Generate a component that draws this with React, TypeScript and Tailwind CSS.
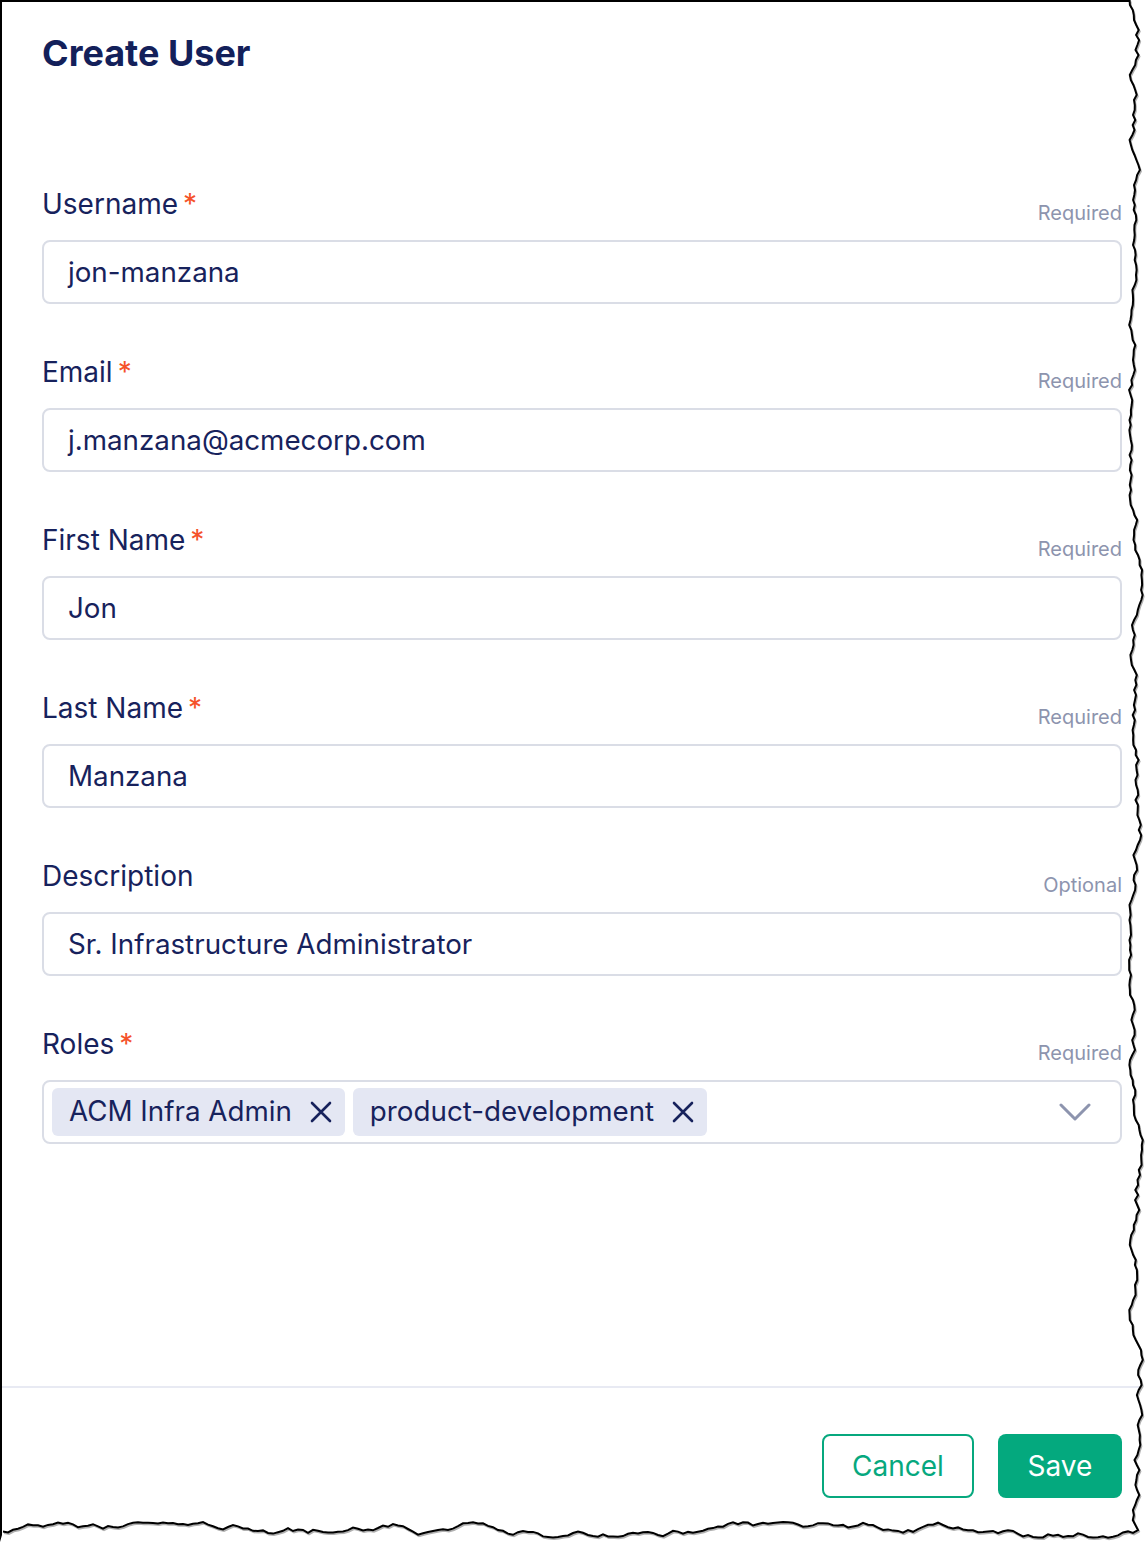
import React from "react";

function rng(seed: number) {
  let s = seed;
  return () => {
    s = (s * 1103515245 + 12345) % 2147483648;
    return s / 2147483648;
  };
}

function buildTear() {
  const r = rng(7);
  const right: [number, number][] = [];
  let x = 1124;
  for (let y = 0; y <= 1522; y += 5) {
    x += (r() - 0.5) * 6;
    if (x < 1129) x = 1129 + r() * 2;
    if (x > 1143) x = 1143 - r() * 2;
    right.push([x, y]);
  }
  const bottom: [number, number][] = [];
  let y = 1530;
  for (let xx = 1138; xx >= 0; xx -= 5) {
    y += (r() - 0.5) * 6;
    if (y < 1522) y = 1522 + r() * 2;
    if (y > 1538) y = 1538 - r() * 2;
    bottom.push([xx, y]);
  }
  const pts = [...right, ...bottom];
  const line = pts.map(([a, b], i) => `${i === 0 ? "M" : "L"}${a.toFixed(1)},${b.toFixed(1)}`).join(" ");
  const fill = `${line} L0,1542 L1148,1542 L1148,0 Z`;
  return { line, fill };
}

const tear = buildTear();

function LabelRow({ label, required }: { label: string; required: boolean }) {
  return (
    <div className="flex items-end justify-between h-[36px]">
      <div className="text-[28px] leading-[36px] text-[#17225c]">
        {label}
        {required && <span className="text-[#f5522a] ml-[5px]">*</span>}
      </div>
      <div className="text-[20px] leading-[18px] text-[#8d94ae]">{required ? "Required" : "Optional"}</div>
    </div>
  );
}

function Field({ label, required, value }: { label: string; required: boolean; value: string }) {
  return (
    <div className="mb-[50px]">
      <LabelRow label={label} required={required} />
      <div className="mt-[18px] h-[64px] rounded-[8px] border-2 border-[#dadde6] flex items-center px-[24px] pt-[1px] text-[27.75px] text-[#17225c]">
        {value}
      </div>
    </div>
  );
}

function XIcon() {
  return (
    <svg width="22" height="22" viewBox="0 0 22 22" fill="none" stroke="#17225c" strokeWidth="2.6" strokeLinecap="round">
      <path d="M2 2 L20 20 M20 2 L2 20" />
    </svg>
  );
}

function Chip({ text }: { text: string }) {
  return (
    <div className="h-[48px] rounded-[6px] bg-[#e4e7f3] flex items-center pl-[17px] pr-[13px] gap-[18px] text-[27.75px] text-[#17225c]">
      <span>{text}</span>
      <XIcon />
    </div>
  );
}

export default function App() {
  return (
    <div className="relative w-[1148px] h-[1542px] bg-white overflow-hidden" style={{ fontFamily: "Inter, 'Noto Sans', sans-serif" }}>
      <div className="w-[1148px] h-[1542px] border-l-2 border-t-2 border-black flex flex-col">
        <div className="pl-[40px] pr-[26px] flex-1">
          <h1 className="mt-[29px] text-[36px] leading-[44px] font-bold text-[#13205a]">Create User</h1>
          <div className="mt-[111px] w-[1080px]">
            <Field label="Username" required value="jon-manzana" />
            <Field label="Email" required value="j.manzana@acmecorp.com" />
            <Field label="First Name" required value="Jon" />
            <Field label="Last Name" required value="Manzana" />
            <Field label="Description" required={false} value="Sr. Infrastructure Administrator" />
            <div>
              <LabelRow label="Roles" required />
              <div className="mt-[18px] h-[64px] rounded-[8px] border-2 border-[#dadde6] flex items-center pl-[8px] pr-[29px]">
                <div className="flex gap-[8px] flex-1">
                  <Chip text="ACM Infra Admin" />
                  <Chip text="product-development" />
                </div>
                <svg width="32" height="19" viewBox="0 0 32 19" fill="none" stroke="#8d94ae" strokeWidth="3" strokeLinecap="round" strokeLinejoin="round">
                  <path d="M2 2 L16 16 L30 2" />
                </svg>
              </div>
            </div>
          </div>
        </div>
        <div className="h-[2px] bg-[#e8eaf3] mb-[46px]" />
        <div className="w-[1120px] flex justify-end gap-[24px] mb-[44px]">
          <button className="w-[152px] h-[64px] rounded-[8px] border-2 border-[#06a87e] text-[#06a87e] text-[28px] bg-white">Cancel</button>
          <button className="w-[124px] h-[64px] rounded-[8px] bg-[#04a97e] text-white text-[28px]">Save</button>
        </div>
      </div>
      <svg className="absolute inset-0" width="1148" height="1542" viewBox="0 0 1148 1542">
        <path d={tear.fill} fill="white" />
        <path d={tear.line} fill="none" stroke="#b0b0b0" strokeWidth="2" transform="translate(1,1.5)" />
        <path d={tear.line} fill="none" stroke="black" strokeWidth="2" />
      </svg>
    </div>
  );
}
